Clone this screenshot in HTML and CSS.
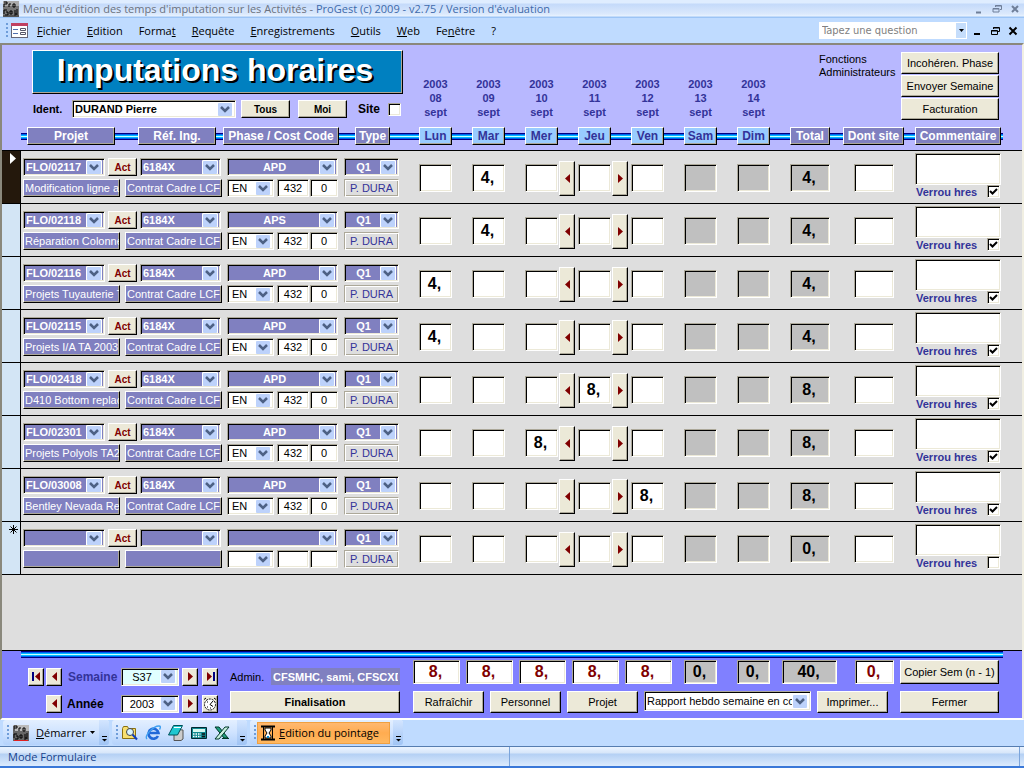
FILE: index.html
```html
<!DOCTYPE html>
<html lang="fr">
<head>
    <meta charset="UTF-8">
    <meta name="viewport" content="width=device-width, initial-scale=1.0">
    <title>Menu d'édition des temps d'imputation sur les Activités</title>
    <link rel="stylesheet" href="styles.css">
</head>
<body>
    <header class="titlebar">
        <svg class="app_icon" viewBox="0 0 16 16">
            <rect width="16" height="16" fill="#777"/>
            <path d="M0 0h16v5H0z" fill="#aaa"/>
            <path d="M1 1h3v2H1v3M6 6V3h2M10 3h2v3h-2zM1 13V9h3M3 11h2v3H2M7 10h2v3H7zM11 10h2M11 12h2v2h-2M14 8v6" fill="none" stroke="#000"/>
            <path d="M0 15h16" stroke="#333"/>
        </svg>
        <h1>Menu d'édition des temps d'imputation sur les Activités - <span>ProGest (c) 2009 - v2.75 / Version d'évaluation</span></h1>
        <div class="win_btns">
            <button aria-label="Réduire"><svg viewBox="0 0 10 10"><path d="M2 8.5h5" stroke="currentColor" stroke-width="2"/></svg></button>
            <button aria-label="Restaurer"><svg viewBox="0 0 10 10"><path d="M3.5 3V1.5h6v4H8M1 4.500h6v3.500H1zM1 5h6M3 2h6" fill="none" stroke="currentColor"/></svg></button>
            <button aria-label="Fermer"><svg viewBox="0 0 10 10"><path d="M2 2l6 6M8 2L2 8" stroke="currentColor" stroke-width="2"/></svg></button>
        </div>
    </header>

    <nav class="menubar">
        <i class="grip"></i>
        <svg class="form_icon" viewBox="0 0 17 15">
            <rect x=".5" y=".5" width="16" height="14" fill="#fff" stroke="#667"/>
            <path d="M0 0h17v3H0z" fill="#c04060"/>
            <path d="M2 6.500h5M2 10.500h5" stroke="#5070b0"/>
            <path d="M9.500 5.500h5v2h-5zM9.500 9.500h5v2h-5z" fill="none" stroke="#556"/>
        </svg>
        <ul>
            <li><a href="#"><u>F</u>ichier</a></li>
            <li><a href="#"><u>E</u>dition</a></li>
            <li><a href="#">Forma<u>t</u></a></li>
            <li><a href="#"><u>R</u>equête</a></li>
            <li><a href="#"><u>E</u>nregistrements</a></li>
            <li><a href="#"><u>O</u>utils</a></li>
            <li><a href="#"><u>W</u>eb</a></li>
            <li><a href="#">Fe<u>n</u>être</a></li>
            <li><a href="#">?</a></li>
        </ul>
        <div class="question">
            <input type="text" placeholder="Tapez une question" aria-label="Tapez une question">
            <button aria-label="Questions"><svg viewBox="0 0 5 3"><path d="M0 0h5L2.500 3z"/></svg></button>
        </div>
        <div class="win_btns dark">
            <button aria-label="Réduire"><svg viewBox="0 0 10 10"><path d="M2 8h6" stroke="currentColor" stroke-width="2"/></svg></button>
            <button aria-label="Restaurer"><svg viewBox="0 0 10 10"><path d="M3.500 3V1.500h6v4H8M1.500 4.500h6v4h-6zM1 5h6M3 2h6" fill="none" stroke="currentColor"/></svg></button>
            <button aria-label="Fermer"><svg viewBox="0 0 10 10"><path d="M1.500 1.500l7 7M8.500 1.500l-7 7" stroke="currentColor" stroke-width="2"/></svg></button>
        </div>
    </nav>

    <main class="form">
        <section class="form_header">
            <div class="header_top">
                <div class="header_left">
                    <h2 class="raised">Imputations horaires</h2>
                    <div class="ident">
                        <label class="ident_label" for="ident">Ident.</label>
                        <select id="ident" class="sunken"><option>DURAND Pierre</option></select>
                        <button class="raised">Tous</button>
                        <button class="raised">Moi</button>
                        <label class="site_label" for="site">Site</label>
                        <input type="checkbox" id="site">
                    </div>
                </div>
                <div class="dates">
                    <p>2003<br>08<br>sept</p>
                    <p>2003<br>09<br>sept</p>
                    <p>2003<br>10<br>sept</p>
                    <p>2003<br>11<br>sept</p>
                    <p>2003<br>12<br>sept</p>
                    <p>2003<br>13<br>sept</p>
                    <p>2003<br>14<br>sept</p>
                </div>
                <div class="admin_fn">
                    <p>Fonctions Administrateurs</p>
                    <div class="admin_btns">
                        <button class="raised">Incohéren. Phase</button>
                        <button class="raised">Envoyer Semaine</button>
                        <button class="raised">Facturation</button>
                    </div>
                </div>
            </div>
            <div class="labels">
                <div class="labels_left">
                    <span class="tag raised w_projet">Projet</span>
                    <span class="tag raised w_ref">Réf. Ing.</span>
                    <span class="tag raised w_phase">Phase / Cost Code</span>
                    <span class="tag raised w_type">Type</span>
                </div>
                <span class="tag raised day">Lun</span>
                <span class="tag raised day">Mar</span>
                <span class="tag raised day">Mer</span>
                <span class="tag raised day">Jeu</span>
                <span class="tag raised day">Ven</span>
                <span class="tag raised day">Sam</span>
                <span class="tag raised day">Dim</span>
                <span class="tag raised w_total">Total</span>
                <span class="tag raised w_site">Dont site</span>
                <span class="tag raised w_comment">Commentaire</span>
            </div>
        </section>

        <section class="detail" id="detail"></section>

        <section class="form_footer">
            <div class="band"></div>
            <div class="footer_body">
                <div class="nav_grid">
                    <button class="raised nav" aria-label="Première semaine"><svg viewBox="0 0 11 11"><path d="M1 1h2v9H1z" fill="#000080"/><path d="M9 1v9L4 5.500z"/></svg></button>
                    <button class="raised nav" aria-label="Semaine précédente"><svg viewBox="0 0 11 11"><path d="M8 1v9L3 5.500z"/></svg></button>
                    <label class="lbl_semaine" for="semaine">Semaine</label>
                    <select id="semaine" class="sunken centered tint"><option>S37</option></select>
                    <button class="raised nav" aria-label="Semaine suivante"><svg viewBox="0 0 11 11"><path d="M3 1v9l5-4.500z"/></svg></button>
                    <button class="raised nav" aria-label="Dernière semaine"><svg viewBox="0 0 11 11"><path d="M2 1v9l5-4.500z"/><path d="M8 1h2v9H8z" fill="#000080"/></svg></button>

                    <button class="raised nav col2" aria-label="Année précédente"><svg viewBox="0 0 11 11"><path d="M8 1v9L3 5.500z"/></svg></button>
                    <label class="lbl_annee" for="annee">Année</label>
                    <select id="annee" class="sunken centered"><option>2003</option></select>
                    <button class="raised nav" aria-label="Année suivante"><svg viewBox="0 0 11 11"><path d="M3 1v9l5-4.500z"/></svg></button>
                    <button class="raised nav clock" aria-label="Aujourd'hui"><svg viewBox="0 0 14 14"><circle cx="7" cy="7.500" r="5.500" fill="#fff" stroke="#000" stroke-dasharray="2 1"/><path d="M10 4L7 7.500l3 2M1 2.500L3 1M13 2.500L11 1M4 5h1M4 10h1M7 11h1" fill="none" stroke="#000"/></svg></button>
                </div>
                <div class="admin_col">
                    <div class="admin_line">
                        <label for="admins">Admin.</label>
                        <input type="text" id="admins" value="CFSMHC, sami, CFSCXD, CFSABT" readonly>
                    </div>
                    <button class="raised bold">Finalisation</button>
                </div>
                <div class="sum_col">
                    <div class="sums">
                        <output class="sunken cell red">8,</output>
                        <output class="sunken cell red">8,</output>
                        <output class="sunken cell red">8,</output>
                        <output class="sunken cell red">8,</output>
                        <output class="sunken cell red">8,</output>
                        <output class="sunken cell grey we">0,</output>
                        <output class="sunken cell grey we">0,</output>
                        <output class="sunken cell grey all">40,</output>
                        <output class="sunken cell red site">0,</output>
                        <button class="raised">Copier Sem (n - 1)</button>
                    </div>
                    <div class="actions">
                        <button class="raised">Rafraîchir</button>
                        <button class="raised">Personnel</button>
                        <button class="raised">Projet</button>
                        <select class="sunken" aria-label="Rapport"><option>Rapport hebdo semaine en cours</option></select>
                        <button class="raised">Imprimer...</button>
                        <button class="raised last">Fermer</button>
                    </div>
                </div>
            </div>
        </section>
    </main>

    <div class="taskbar">
        <div class="tools t_start">
            <i class="grip"></i>
            <button class="start">
                <svg class="app_icon" viewBox="0 0 16 16">
                    <rect width="16" height="16" fill="#666"/>
                    <path d="M0 0h16v6H0z" fill="#bbb"/>
                    <path d="M1 6V1h3v2H1M6 6V3h2M10 3h2v3h-2zM1 13V9h3M3 11h2v3H2M7 10h2v3H7zM11 10h2M11 12h2v2h-2M14 8v6" fill="none" stroke="#000"/>
                    <path d="M1 15.500h14" stroke="#e02020"/>
                </svg>
                <span><u>D</u>émarrer</span>
                <svg class="caret" viewBox="0 0 5 3"><path d="M0 0h5L2.500 3z"/></svg>
            </button>
            <button class="more" aria-label="Options"><svg viewBox="0 0 7 7"><path d="M1 1.500h5" stroke="#000"/><path d="M1 4h5L3.500 6.500z"/></svg></button>
        </div>
        <div class="tools t_icons">
            <i class="grip"></i>
            <button class="ico" aria-label="Rechercher">
                <svg viewBox="0 0 16 16"><path d="M.5 3.500l1-2h4l1 2h7v10H.5z" fill="#f8e070" stroke="#8a7010"/><circle cx="8" cy="7" r="3.500" fill="#d8f4ff" stroke="#444"/><path d="M10.500 9.500l4.500 5" stroke="#1040c0" stroke-width="2"/></svg>
            </button>
            <button class="ico" aria-label="Internet">
                <svg viewBox="0 0 16 16"><path d="M13 11a5 5 0 1 1 .5-3H5" fill="none" stroke="#2068d8" stroke-width="2.600"/><path d="M2 14C-1 11 8 1 14 1c2 0 1.500 2 .5 3.500" fill="none" stroke="#40a0f0" stroke-width="1.400"/></svg>
            </button>
            <button class="ico" aria-label="Bloc-notes">
                <svg viewBox="0 0 16 16"><path d="M6 4l9 1v9l-2 1.500H6z" fill="#ccc" stroke="#555"/><path d="M5.500.5h9L9.500 10h-9z" fill="#20c8d0" stroke="#005058"/><path d="M6 2.500h7" stroke="#fff"/></svg>
            </button>
            <button class="ico" aria-label="Calculatrice">
                <svg viewBox="0 0 16 16"><path d="M.5 2.500h15v11H.5z" fill="#108890" stroke="#002830"/><path d="M2 4h12v3H2z" fill="#d8f8f0"/><path d="M2 9h8M2 11.500h8" stroke="#fff" stroke-width="1.500" stroke-dasharray="1.500 1"/><path d="M11 9h3M11 11.500h3" stroke="#111" stroke-width="1.500"/></svg>
            </button>
            <button class="ico" aria-label="Excel">
                <svg viewBox="0 0 16 16"><path d="M1 2h4l9 11h-4z" fill="#20a080" stroke="#003828"/><path d="M15 2h-4L1 14h4z" fill="#c8f0e0" stroke="#003828"/><path d="M8 13.500h7" stroke="#003828"/></svg>
            </button>
            <button class="more" aria-label="Options"><svg viewBox="0 0 7 7"><path d="M1 1.500h5" stroke="#000"/><path d="M1 4h5L3.500 6.500z"/></svg></button>
        </div>
        <div class="tools t_win">
            <i class="grip"></i>
            <button class="current">
                <svg viewBox="0 0 14 16"><path d="M0 1.500h14M0 14.500h14" stroke="#000" stroke-width="2"/><path d="M2.500 2v12M11.500 2v12" stroke="#000"/><path d="M4 3h6v2L8 8l2 3v2H4v-2l2-3-2-3z" fill="#fff" stroke="#000"/><path d="M6 12h2" stroke="#08c" stroke-width="2"/></svg>
                <span><u>E</u>dition du pointage</span>
            </button>
            <button class="more" aria-label="Options"><svg viewBox="0 0 7 7"><path d="M1 1.500h5" stroke="#000"/><path d="M1 4h5L3.500 6.500z"/></svg></button>
        </div>
    </div>

    <footer class="statusbar">
        <span>Mode Formulaire</span>
        <span></span>
    </footer>
    <script src="main.js"></script>
</body>
</html>
```
FILE: styles.css
```css
* {
    box-sizing: border-box;
    margin: 0;
    padding: 0;
}
body {
    display: flex;
    flex-direction: column;
    min-height: 100vh;
    background: #bfdbff;
    font-family: "Liberation Sans", Arial, sans-serif;
    font-size: 11px;
    color: #000;
}
button, input, select, textarea {
    font: inherit;
    color: inherit;
    border: 0;
    border-radius: 0;
    background: none;
    appearance: none;
}
button {
    display: flex;
    align-items: center;
    justify-content: center;
    white-space: nowrap;
}
a {
    color: inherit;
    text-decoration: none;
}
ul {
    list-style: none;
}

/* borders */
.raised {
    border: 1px solid #000;
    border-top-color: #fff;
    border-left-color: #fff;
    box-shadow: inset -1px -1px 0 #aca899;
}
button.raised {
    background: #ece9d8;
}
.sunken {
    border: 1px solid #fff;
    border-top-color: #aca899;
    border-left-color: #aca899;
    box-shadow: inset 1px 1px 0 #000, inset -1px -1px 0 #ece9d8;
    background-color: #fff;
}
select.sunken {
    height: 18px;
    padding: 0 18px 0 2px;
    overflow: hidden;
    background-image: url("data:image/svg+xml,%3Csvg xmlns='http://www.w3.org/2000/svg' width='16' height='15'%3E%3Crect width='16' height='15' rx='1' fill='%23fff'/%3E%3Crect x='1' y='1' width='14' height='13' rx='1' fill='%23bdd2fb'/%3E%3Cpath d='M4 5l4 4 4-4' fill='none' stroke='%234d6185' stroke-width='2.500'/%3E%3C/svg%3E");
    background-repeat: no-repeat;
    background-position: right 2px center;
}
select.centered {
    text-align: center;
    text-align-last: center;
}
input[type="checkbox"] {
    width: 13px;
    height: 13px;
    border: 1px solid #fff;
    border-top-color: #aca899;
    border-left-color: #aca899;
    box-shadow: inset 1px 1px 0 #000, inset -1px -1px 0 #ece9d8;
    background: #fff;
}
input[type="checkbox"]:checked {
    background: #fff url("data:image/svg+xml,%3Csvg xmlns='http://www.w3.org/2000/svg' width='9' height='9'%3E%3Cpath d='M1 4l2.500 2.500L8 2' fill='none' stroke='%23000' stroke-width='2'/%3E%3C/svg%3E") center no-repeat;
}
.grip {
    width: 2px;
    height: 15px;
    background: repeating-linear-gradient(#6f9dd9 0 2px, transparent 2px 4px);
}

/* title bar */
.titlebar {
    display: flex;
    align-items: center;
    height: 18px;
    padding: 0 4px 0 3px;
    background: linear-gradient(#dfedff 0 3px, #c4dafa 4px, #dbe9fc 14px, #e8f2ff 16px, #9cc4f5 17px);
    font-family: "Open Sans", "Noto Sans", sans-serif;
}
.app_icon {
    width: 16px;
    height: 16px;
}
.titlebar h1 {
    flex: 1;
    margin-left: 4px;
    font-size: 11px;
    font-weight: normal;
    line-height: 16px;
    color: #6b7280;
}
.titlebar h1 span {
    color: #3e6aaa;
}
.win_btns {
    display: flex;
    gap: 8px;
    color: #6f7f99;
}
.win_btns.dark {
    color: #000;
}
.win_btns svg {
    width: 10px;
    height: 10px;
}

/* menu */
.menubar {
    display: flex;
    align-items: center;
    height: 25px;
    padding: 0 6px;
    font-family: "Open Sans", "Noto Sans", sans-serif;
}
.form_icon {
    width: 17px;
    height: 15px;
    margin-left: 3px;
}
.menubar ul {
    display: flex;
    flex: 1;
    gap: 16px;
    margin-left: 9px;
}
.question {
    display: flex;
    width: 148px;
    height: 17px;
    margin-right: 5px;
    background: #fff;
    font-family: "DejaVu Sans Condensed", sans-serif;
}
.question input {
    flex: 1;
    min-width: 0;
    padding-left: 3px;
}
.question input::placeholder {
    color: #808080;
}
.question button {
    width: 12px;
    border: 1px solid #fff;
    background: #c5ddfb;
}
.question svg, .caret {
    width: 5px;
    height: 3px;
}

/* form */
.form {
    display: flex;
    flex: 1;
    flex-direction: column;
    border: 2px solid #8a887c;
    border-right-color: #f1efe2;
    border-bottom-color: #fff;
    background: #dedede;
}
.form_header {
    padding: 5px 0;
    border-bottom: 1px solid #000;
    background: #b8b8ff;
}
.header_top {
    display: grid;
    grid-template-columns: 396px 371px auto;
    justify-content: start;
    padding-left: 21px;
}
.header_left {
    padding-left: 9px;
}
.header_left h2 {
    width: 371px;
    height: 44px;
    padding-right: 5px;
    background: #0080c0;
    font-size: 32px;
    line-height: 38px;
    text-align: center;
    color: #fff;
    text-shadow: 2px 2px 0 #000;
}
.ident {
    display: flex;
    align-items: center;
    height: 18px;
    margin-top: 6px;
    font-weight: bold;
}
.ident_label {
    width: 40px;
    padding-left: 1px;
}
.ident select {
    width: 164px;
    margin-right: 5px;
}
.ident .raised {
    width: 49px;
    height: 18px;
    margin-right: 8px;
    font-size: 10px;
}
.site_label {
    width: 33px;
    padding-left: 3px;
    font-size: 12px;
}
.dates {
    display: grid;
    grid-template-columns: repeat(7, 53px);
    align-self: end;
    padding-bottom: 1px;
    font-weight: bold;
    line-height: 14px;
    text-align: center;
    color: #333399;
}
.dates p {
    width: 33px;
}
.admin_fn {
    display: flex;
    padding: 2px 0 0 29px;
}
.admin_fn p {
    width: 82px;
    padding-top: 1px;
    line-height: 13px;
}
.admin_btns {
    display: grid;
    row-gap: 1px;
}
.admin_btns button {
    width: 98px;
    height: 22px;
}
.labels {
    display: grid;
    grid-template-columns: 396px repeat(8, 53px) 72px 87px;
    justify-content: start;
    width: 982px;
    margin-top: 7px;
    margin-left: 19px;
    padding-left: 2px;
    background: linear-gradient(#000080 1px, #0060f0 1px 2px, #00b8ff 2px 3px, #c8ffff 3px 4px, #00b8ff 4px 5px, #0060f0 5px 6px, #000080 6px) 0 6px / 100% 7px no-repeat;
}
.labels_left {
    display: flex;
    padding-left: 4px;
}
.tag {
    height: 18px;
    background: #8080c0;
    font-size: 12px;
    font-weight: bold;
    line-height: 16px;
    text-align: center;
    white-space: nowrap;
    color: #fff;
}
.tag.day {
    width: 33px;
    background: #99ccff;
    color: #333399;
}
.w_projet {
    width: 88px;
    margin-right: 23px;
}
.w_ref {
    width: 78px;
    margin-right: 7px;
}
.w_phase {
    width: 116px;
    margin-right: 16px;
}
.w_type {
    width: 35px;
}
.w_total {
    width: 40px;
}
.w_site {
    width: 61px;
}
.w_comment {
    width: 86px;
}

/* rows */
.detail {
    flex: 1;
}
.row {
    display: flex;
    height: 53px;
    border-bottom: 1px solid #000;
}
.selector {
    width: 19px;
    border-right: 1px solid #000;
    background: #d3e5f5;
}
.selector svg {
    display: block;
    width: 10px;
    height: 11px;
    margin: 2px 0 0 6px;
}
.row.active .selector {
    background: #24180c;
}
.row_grid {
    display: grid;
    grid-template-columns: 396px repeat(7, 53px) 64px 61px 86px;
    align-items: center;
    padding: 2px 0 0 2px;
}
.fields {
    display: grid;
    row-gap: 3px;
    margin-bottom: 1px;
}
.line {
    display: flex;
    height: 18px;
}
.line select.purple {
    background-color: #8080c0;
    font-weight: bold;
    color: #fff;
}
.projet {
    width: 82px;
    margin-right: 3px;
}
.act {
    width: 29px;
    margin-right: 3px;
    font-size: 10px;
    font-weight: bold;
    color: #800000;
}
.ref {
    width: 81px;
    margin-right: 6px;
}
.phase {
    width: 111px;
    margin-right: 6px;
}
.type {
    width: 55px;
}
.desc {
    width: 97px;
    margin-right: 5px;
    padding-left: 1px;
    background: #8080c0;
    color: #fff;
}
.lang {
    width: 47px;
    margin-right: 3px;
}
.line select.lang {
    padding-left: 4px;
}
.code, .idx {
    text-align: center;
}
.code {
    width: 32px;
    margin-right: 1px;
}
.idx {
    width: 28px;
    margin-right: 6px;
}
.who {
    width: 55px;
    border: 1px solid #fff;
    border-top-color: #aca899;
    border-left-color: #aca899;
    box-shadow: inset 1px 1px 0 #fff, inset -1px -1px 0 #aca899;
    text-align: center;
    color: #333399;
}
.slot {
    display: flex;
    align-items: center;
    gap: 1px;
}
.cell {
    display: block;
    width: 33px;
    height: 28px;
    padding-right: 2px;
    font-size: 16px;
    font-weight: bold;
    text-align: center;
}
.cell.wide {
    width: 40px;
}
.cell.grey {
    background: #c0c0c0;
}
.cell.red {
    color: #800000;
}
.shift {
    width: 16px;
    height: 35px;
}
.shift svg {
    width: 5px;
    height: 9px;
    fill: #800000;
}
.comment {
    align-self: start;
}
.comment textarea {
    display: block;
    width: 86px;
    height: 32px;
    resize: none;
}
.comment label {
    display: flex;
    align-items: center;
    justify-content: space-between;
    padding: 0 1px;
    font-weight: bold;
    white-space: nowrap;
    color: #333399;
}

/* footer */
.form_footer {
    border-top: 1px solid #000;
    background: #8080ff;
}
.band {
    width: 982px;
    height: 7px;
    margin-left: 19px;
    background: linear-gradient(#000080 1px, #0060f0 1px 2px, #00b8ff 2px 3px, #c8ffff 3px 4px, #00b8ff 4px 5px, #0060f0 5px 6px, #000080 6px);
}
.footer_body {
    display: flex;
    padding: 2px 0 5px 26px;
}
.nav_grid {
    display: grid;
    grid-template-columns: 18px 21px 54px 61px 20px 28px;
    row-gap: 8px;
    align-items: center;
    padding-top: 7px;
}
.nav {
    width: 16px;
    height: 18px;
}
.nav.col2 {
    grid-column: 2;
}
.nav svg {
    width: 11px;
    height: 11px;
    fill: #800000;
}
.clock svg {
    width: 14px;
    height: 14px;
}
.nav_grid label {
    font-size: 12px;
    font-weight: bold;
}
.lbl_semaine {
    padding-left: 1px;
    color: #333399;
}
.nav_grid select {
    width: 58px;
}
.nav_grid select.tint {
    background-color: #e0ffff;
}
.admin_col {
    width: 170px;
    padding-top: 8px;
}
.admin_line {
    display: flex;
    align-items: center;
    justify-content: space-between;
}
.admin_line input {
    width: 129px;
    height: 17px;
    padding: 0 2px;
    background: #8080c0;
    font-weight: bold;
    color: #fff;
}
.admin_col button {
    width: 170px;
    height: 22px;
    margin-top: 6px;
}
.bold {
    font-weight: bold;
}
.sum_col {
    margin-left: 13px;
}
.sums {
    display: grid;
    grid-template-columns: repeat(4, 53px) 59px 53px 45px 73px 45px 99px;
}
.sums .cell {
    width: 47px;
    height: 24px;
    line-height: 22px;
}
.sums .cell.we {
    width: 33px;
}
.sums .cell.all {
    width: 55px;
}
.sums .cell.site {
    width: 39px;
}
.sums button {
    width: 99px;
    height: 24px;
}
.actions {
    display: grid;
    grid-template-columns: repeat(3, 77px) 173px 83px 99px;
    margin-top: 7px;
}
.actions button {
    width: 71px;
    height: 22px;
}
.actions button.last {
    width: 99px;
}
.actions select {
    width: 167px;
    height: 20px;
}

/* taskbar */
.taskbar {
    display: flex;
    gap: 3px;
    padding: 0 3px 1px;
    font-family: "Open Sans", "Noto Sans", sans-serif;
}
.tools {
    display: flex;
    align-items: center;
    height: 25px;
    padding-left: 4px;
    border-radius: 3px;
    background: linear-gradient(#e3efff, #cfe3ff 50%, #b4d2fb);
    overflow: hidden;
}
.t_start {
    width: 106px;
}
.t_icons {
    width: 135px;
}
.t_win {
    width: 153px;
}
.start {
    gap: 4px;
    margin-left: 4px;
}
.start span {
    margin-left: 3px;
}
.ico {
    margin-left: 7px;
}
.ico:first-of-type {
    margin-left: 4px;
}
.ico svg {
    width: 16px;
    height: 16px;
}
.current {
    justify-content: flex-start;
    gap: 4px;
    width: 133px;
    height: 22px;
    margin-left: 1px;
    padding-left: 3px;
    border: 1px solid #f0a040;
    background: linear-gradient(#ffb870, #ffac50 50%, #ffb860);
}
.current svg {
    width: 14px;
    height: 16px;
}
.more {
    align-items: flex-end;
    width: 10px;
    height: 25px;
    margin-left: auto;
    padding-bottom: 3px;
    background: linear-gradient(#d3e5ff, #a0c4f4);
}
.more svg {
    width: 7px;
    height: 7px;
}

/* status */
.statusbar {
    display: grid;
    grid-template-columns: 1fr 1fr;
    height: 22px;
    padding-right: 4px;
    border-top: 1px solid #567db0;
    border-bottom: 2px solid #3a78d8;
    background: linear-gradient(#e8f2ff 1px, #d7e6f9 6px, #b4d0f4 7px, #dcebfd);
    font-family: "Open Sans", "Noto Sans", sans-serif;
    line-height: 19px;
    color: #15428b;
}
.statusbar span {
    padding-left: 8px;
    border-right: 1px solid #7ba4da;
}
```
FILE: main.js
```js
var rows = [
    { projet: "FLO/02117", phase: "APD", desc: "Modification ligne alim", day: 1, total: "4," },
    { projet: "FLO/02118", phase: "APS", desc: "Réparation Colonne C2", day: 1, total: "4," },
    { projet: "FLO/02116", phase: "APD", desc: "Projets Tuyauterie TA", day: 0, total: "4," },
    { projet: "FLO/02115", phase: "APD", desc: "Projets I/A TA 2003", day: 0, total: "4," },
    { projet: "FLO/02418", phase: "APD", desc: "D410 Bottom replacement", day: 3, total: "8," },
    { projet: "FLO/02301", phase: "APD", desc: "Projets Polyols TA2003", day: 2, total: "8," },
    { projet: "FLO/03008", phase: "APD", desc: "Bentley Nevada Retrofit", day: 4, total: "8," },
    { projet: "", phase: "", desc: "", day: -1, total: "0,", empty: true }
];
var days = ["Lun", "Mar", "Mer", "Jeu", "Ven", "Sam", "Dim"];

function select(cls, name, value) {
    return '<select class="sunken ' + cls + '" aria-label="' + name + '"><option>' + value + '</option></select>';
}

function input(cls, name, value) {
    return '<input type="text" class="' + cls + '" aria-label="' + name + '" value="' + value + '">';
}

function marker(i, row) {
    if (i === 0) {
        return '<svg viewBox="0 0 10 11"><path d="M2 0v11l6-5.500z" fill="#fff"/></svg>';
    }
    if (row.empty) {
        return '<svg viewBox="0 0 10 11"><path d="M5.500 1v9M1 5.500h9M2.500 2.500l6 6M8.500 2.500l-6 6" stroke="#000"/></svg>';
    }
    return "";
}

function arrow(name, d) {
    return '<button class="raised shift" aria-label="' + name + '"><svg viewBox="0 0 5 9"><path d="' + d + '"/></svg></button>';
}

function slots(row) {
    var html = "";
    for (var d = 0; d < days.length; d++) {
        html += '<div class="slot">' + input("sunken cell" + (d > 4 ? " grey" : ""), days[d], d === row.day ? row.total : "");
        if (d === 2) {
            html += arrow("Jour précédent", "M5 0v9L0 4.500z");
        }
        if (d === 3) {
            html += arrow("Jour suivant", "M0 0v9l5-4.500z");
        }
        html += "</div>";
    }
    return html;
}

function render(row, i) {
    return '<div class="row' + (i === 0 ? " active" : "") + '">' +
        '<div class="selector">' + marker(i, row) + '</div>' +
        '<div class="row_grid">' +
            '<div class="fields">' +
                '<div class="line">' +
                    select("purple projet", "Projet", row.projet) +
                    '<button class="raised act">Act</button>' +
                    select("purple ref", "Réf. Ing.", row.empty ? "" : "6184X") +
                    select("purple centered phase", "Phase", row.phase) +
                    select("purple centered type", "Type", "Q1") +
                '</div>' +
                '<div class="line">' +
                    input("raised desc", "Description", row.desc) +
                    input("raised desc", "Contrat", row.empty ? "" : "Contrat Cadre LCF") +
                    select("lang", "Langue", row.empty ? "" : "EN") +
                    input("sunken code", "Cost Code", row.empty ? "" : "432") +
                    input("sunken idx", "Indice", row.empty ? "" : "0") +
                    input("who", "Personne", "P. DURA") +
                '</div>' +
            '</div>' +
            slots(row) +
            input("sunken cell wide grey", "Total", row.total) +
            input("sunken cell wide", "Dont site", "") +
            '<div class="comment">' +
                '<textarea class="sunken" aria-label="Commentaire"></textarea>' +
                '<label>Verrou hres <input type="checkbox"' + (row.empty ? "" : " checked") + '></label>' +
            '</div>' +
        '</div>' +
    '</div>';
}

document.getElementById("detail").innerHTML = rows.map(render).join("");
```
